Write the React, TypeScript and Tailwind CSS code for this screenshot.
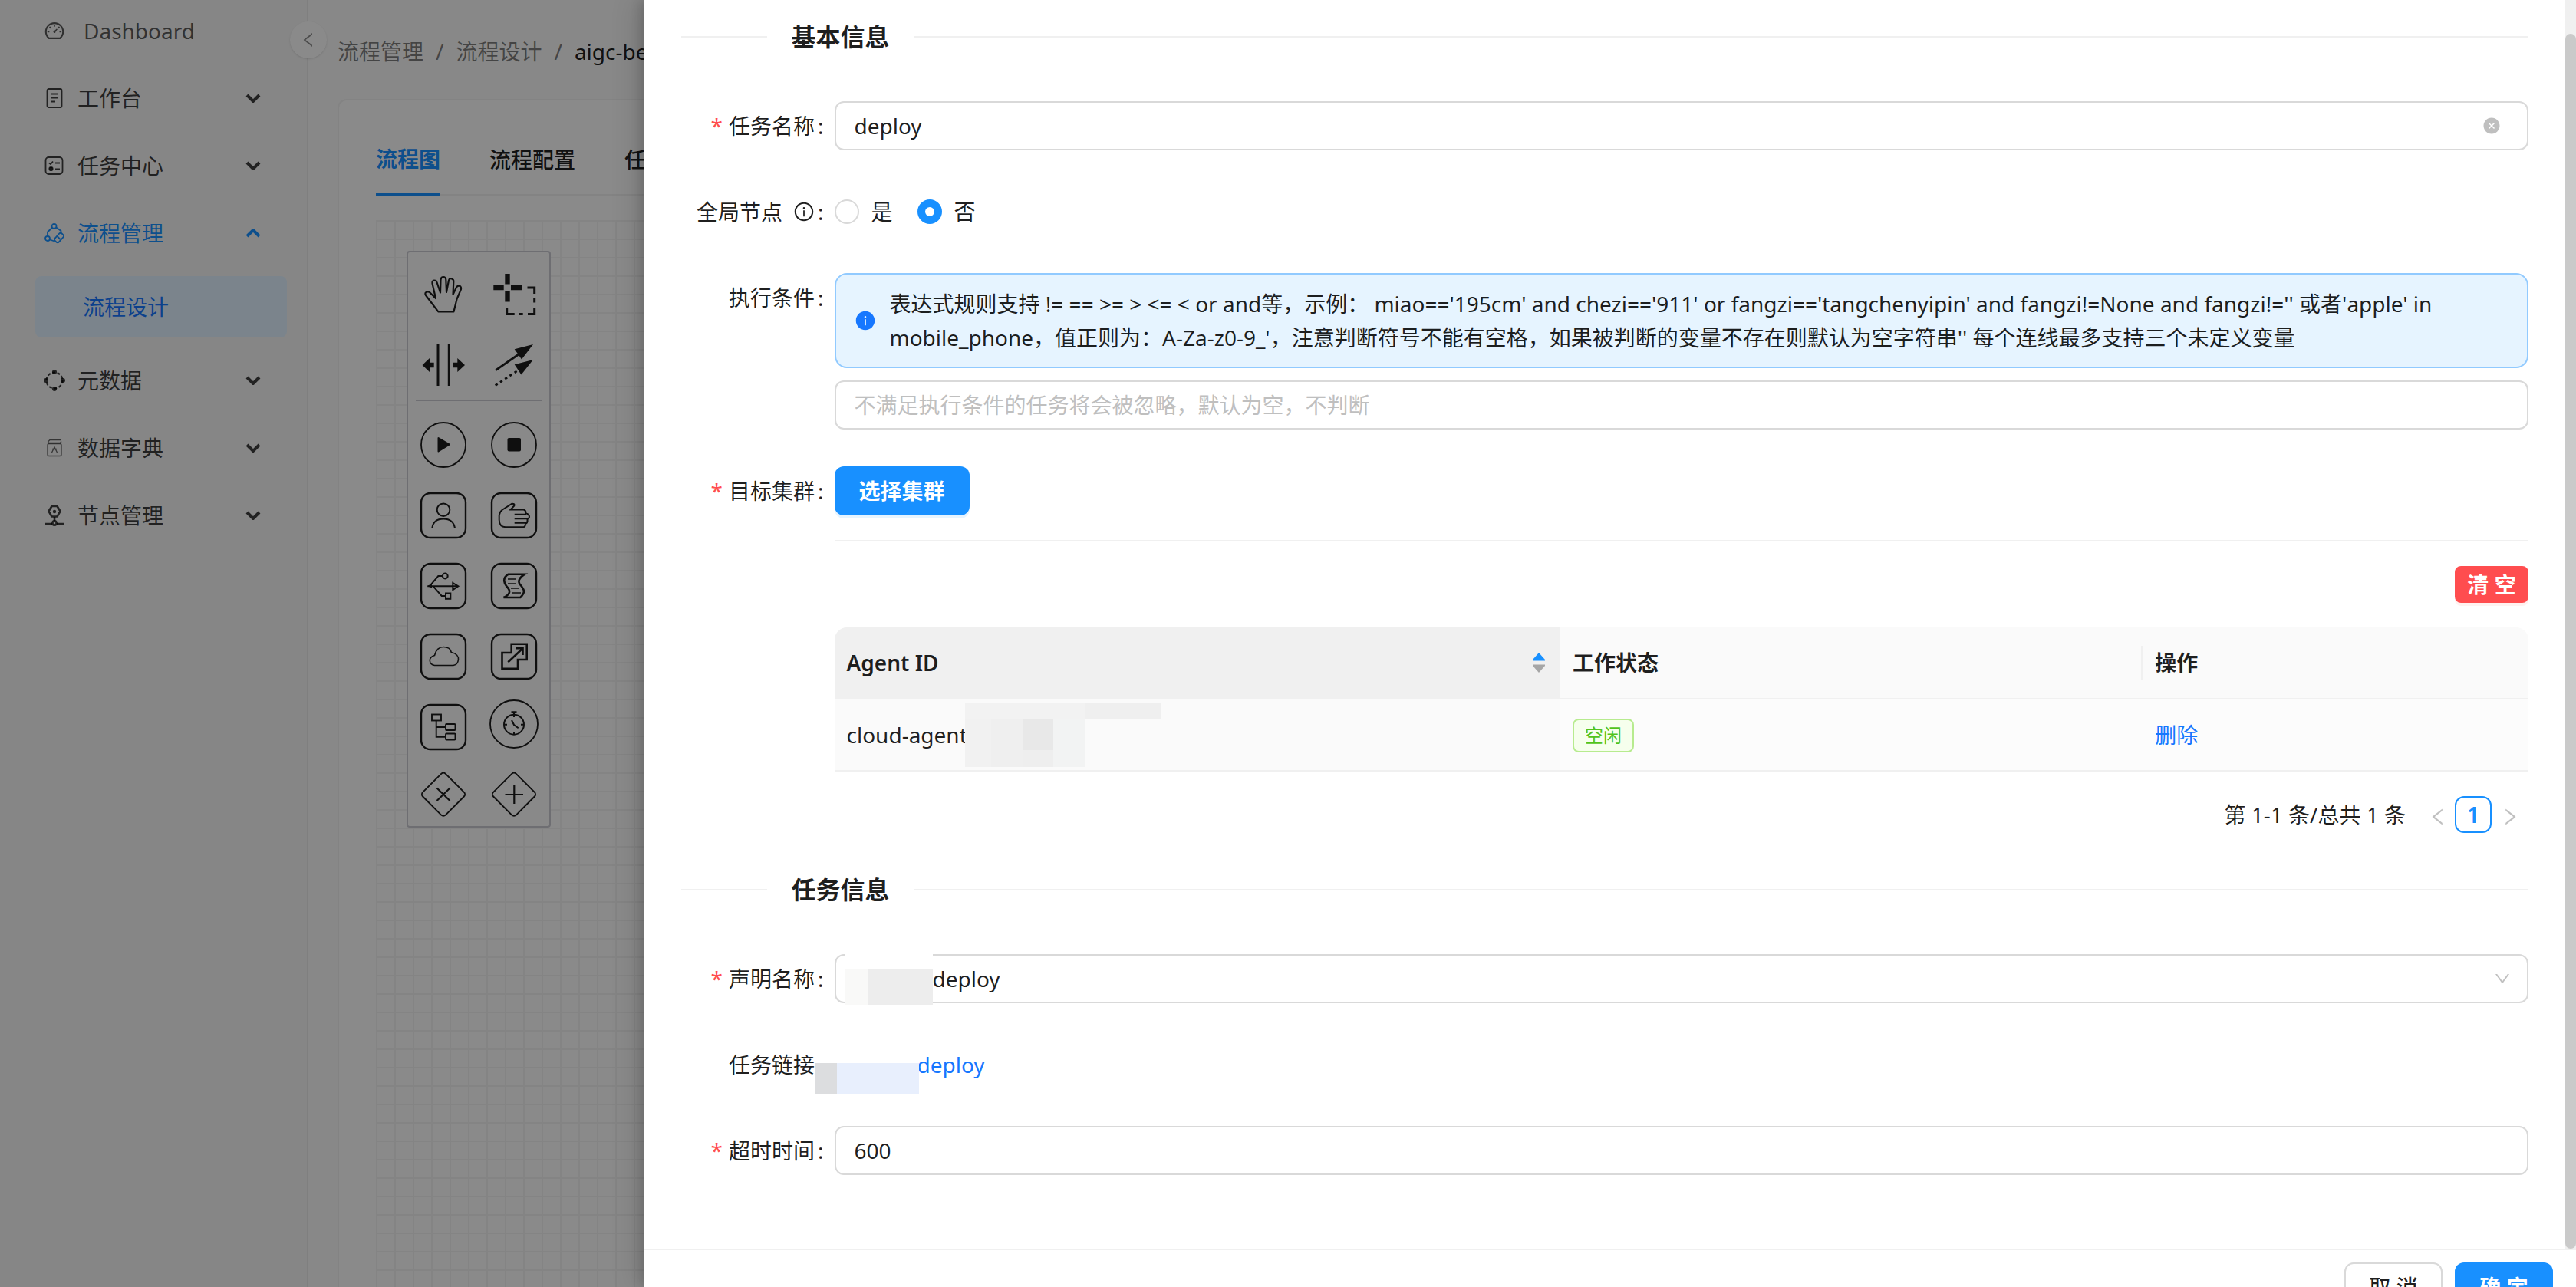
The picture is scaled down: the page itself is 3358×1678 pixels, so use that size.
import type { ReactNode } from "react";
import {
  AiFillCloseCircle,
  AiFillInfoCircle,
  AiOutlineDashboard,
  AiOutlineDown,
  AiOutlineInfoCircle,
  AiOutlineLeft,
  AiOutlineRight,
} from "react-icons/ai";

/* ---------- sidebar icons ---------- */

function MenuSvg({ children }: { children: ReactNode }) {
  return (
    <svg viewBox="0 0 28 28" className="size-7 shrink-0" fill="none" stroke="currentColor" strokeWidth="1.8">
      {children}
    </svg>
  );
}

const WorkbenchIcon = () => (
  <MenuSvg>
    <rect x="4.5" y="2" width="19" height="24" rx="2" />
    <path d="M9 8.5h10M9 13.5h10M9 18.5h6" />
  </MenuSvg>
);

const TaskIcon = () => (
  <MenuSvg>
    <rect x="2.5" y="3" width="22" height="22" rx="4" />
    <path d="M7 10.5l2 1.5 3-3.5M15 10.500h6M15 18.500h6" />
    <circle cx="9.500" cy="18" r="2.200" fill="currentColor" />
  </MenuSvg>
);

const FlowIcon = () => (
  <MenuSvg>
    <circle cx="13.500" cy="5" r="3" />
    <circle cx="5" cy="21" r="3" />
    <rect x="13.500" y="16.500" width="13" height="7" rx="2.500" transform="rotate(-48 20 20)" />
    <path d="M10.800 7L5 12.500V18M16.200 6.500L22.500 11V14M8 22.500L14 24.500M17.500 18l4 4" />
  </MenuSvg>
);

const MetaIcon = () => (
  <MenuSvg>
    <circle cx="14" cy="14" r="10.500" strokeDasharray="4 2.600" strokeWidth="2.200" />
    <g fill="currentColor" stroke="none">
      <circle cx="14" cy="3" r="3" />
      <circle cx="14" cy="25" r="3" />
      <circle cx="3" cy="14" r="3" />
      <circle cx="25" cy="14" r="3" />
    </g>
  </MenuSvg>
);

const DictIcon = () => (
  <MenuSvg>
    <g strokeWidth="1.300" opacity="0.8">
      <path d="M6 7.500V5.500l2-2h15M6 7.500h15.500l1.500-2" />
      <rect x="5" y="8.500" width="18" height="16" rx="2" />
      <path d="M10.500 20L14 13l3.500 7M11 15.500h6" />
    </g>
  </MenuSvg>
);

const NodeIcon = () => (
  <MenuSvg>
    <g strokeWidth="2.600">
      <path d="M10.500 2h7l4 6.500-4 7h-7l-4-7z" strokeLinejoin="round" />
      <path d="M14 16v5M2 25h9M17 25h9" />
      <circle cx="14" cy="24" r="2.600" />
    </g>
    <circle cx="14" cy="9" r="2.200" fill="currentColor" stroke="none" />
  </MenuSvg>
);

function Caret({ open }: { open?: boolean }) {
  return (
    <svg viewBox="0 0 20 12" className="ml-auto h-3 w-5" fill="none" stroke="currentColor" strokeWidth="4">
      <path d={open ? "M2 10l8-8 8 8" : "M2 2l8 8 8-8"} />
    </svg>
  );
}

/* ---------- diagram palette ---------- */

const box = <rect x="1" y="1" width="58" height="58" rx="12" strokeWidth="2.400" />;

const tools: { name: string; icon: ReactNode }[] = [
  {
    name: "hand",
    icon: (
      <path
        strokeWidth="2.200"
        strokeLinejoin="round"
        d="M23.300 52.300L7 31Q5 27 9 26.500Q11.500 26 13 28L20 35L15.500 15.500Q15 12 18 11.500Q21 11.500 21.500 14L26 27.500L26.500 10.500Q27 7 30 7Q33 7 33.300 10.500L34 27L37 11.500Q38 8.500 41 9.500Q43.500 10.500 43.300 13L42.500 30L47 20.500Q49 18 51.500 19Q53.500 20.500 53 23L47.500 36L43.500 52.300Z"
      />
    ),
  },
  {
    name: "lasso",
    icon: (
      <>
        <path strokeWidth="6.400" d="M21.500 3v13.500M21.500 26v13.500M3.300 21h13.400M26 21h14" />
        <path strokeWidth="3" d="M47.500 21h9.200v8M56.700 35v5.500M56.700 47v8.500H48M41.700 55.500H36M20.700 47v8.500h10" />
      </>
    ),
  },
  {
    name: "space",
    icon: (
      <>
        <path strokeWidth="3" d="M23 3v54M37.300 3v54" />
        <path
          stroke="none"
          fill="currentColor"
          d="M2.500 30L12 21v5.700h5.700v6.600H12V39zM58 30l-9.700-9v5.700h-6v6.600h6V39z"
        />
      </>
    ),
  },
  {
    name: "connect",
    icon: (
      <>
        <path strokeWidth="2.800" d="M6.300 36.700L36 16" />
        <path strokeWidth="2.800" strokeDasharray="3.500 4" d="M5.700 56.500L35 37" />
        <path
          stroke="none"
          fill="currentColor"
          d="M55 3L30.700 9.300L40 22.500zM55 23L30.700 29.300L39.500 42.500z"
        />
      </>
    ),
  },
];

const shapes: { name: string; icon: ReactNode }[] = [
  {
    name: "start",
    icon: (
      <>
        <circle cx="30" cy="30" r="29" strokeWidth="1.800" />
        <path fill="currentColor" strokeLinejoin="round" d="M23.500 21L38 29.500L23.500 38.500z" />
      </>
    ),
  },
  {
    name: "end",
    icon: (
      <>
        <circle cx="30" cy="30" r="29" strokeWidth="1.800" />
        <rect x="21.500" y="21" width="17.500" height="17.500" rx="2" fill="currentColor" stroke="none" />
      </>
    ),
  },
  {
    name: "user",
    icon: (
      <>
        {box}
        <circle cx="30" cy="22.700" r="8.300" />
        <path d="M15.300 46.500C16.500 38.500 22 34.500 30 34.500S43.500 38.500 45 46.500" />
      </>
    ),
  },
  {
    name: "manual",
    icon: (
      <>
        {box}
        <path d="M27.300 14.700Q31.500 14.500 30.300 17.500L25.500 22.500H42.500Q45.500 23 45.700 27.300Q50 28.500 50 32Q49.500 34.500 47.500 35Q48 40 45 40.700Q45 45 42.300 45.300H19Q11 45 10.700 36V29.700Q11 25.500 14.700 22.700z" />
        <path d="M30.700 28.700H46M30.700 34.300H48M30.700 39.700H46" />
      </>
    ),
  },
  {
    name: "service",
    icon: (
      <>
        {box}
        <path d="M9.300 30.300H49M12.700 29.300L23.300 17H29M16.700 30.300L27.700 43H32.500M42.300 26V35L49.300 30.300z" />
        <circle cx="32.300" cy="17" r="3.400" />
        <rect x="33" y="39.500" width="6.300" height="7.300" />
        <path d="M9 30.300L15 26.500V32.500z" fill="currentColor" stroke="none" />
      </>
    ),
  },
  {
    name: "script",
    icon: (
      <>
        {box}
        <path
          strokeWidth="2.600"
          d="M22.700 14.700H44Q33.500 21.500 37.500 27.500C43 34 46 38 38.300 45H16.500Q27.500 40 22.500 33C17 27 14 20 22.700 14.700z"
        />
        <path strokeWidth="1.400" d="M22 21h10M22 27h11M26 33h10M28 39h11" />
      </>
    ),
  },
  {
    name: "cloud",
    icon: (
      <>
        {box}
        <path
          strokeWidth="1.600"
          d="M18.500 41.500C11 40.500 9.500 31 18.500 28.500C20 21 25 17.500 30 17.500C36 17.500 39.500 20 40.300 24.500C47 26 50 30 49.500 34C49 38.500 46 41 43 41.500z"
        />
      </>
    ),
  },
  {
    name: "call",
    icon: (
      <>
        {box}
        <path strokeWidth="2.600" d="M14.500 25H26.700V13.700H46.700V34H35V45.700H14.500z" />
        <path strokeWidth="2.600" d="M22.300 37.300L41.500 19.300M33 19.300H41.500V28" />
      </>
    ),
  },
  {
    name: "subprocess",
    icon: (
      <>
        {box}
        <g strokeWidth="1.900">
          <rect x="15" y="13.500" width="12" height="8" />
          <rect x="33" y="26" width="12.500" height="8" rx="1" />
          <rect x="33" y="38.500" width="12.500" height="8" rx="1" />
          <path d="M20.700 21.500V42.700H33M20.700 30H33" />
        </g>
      </>
    ),
  },
  {
    name: "timer",
    icon: (
      <>
        <circle cx="30" cy="26" r="31" strokeWidth="1.800" />
        <circle cx="30" cy="26.700" r="13" />
        <path d="M26.500 10.300H33.500M30 10.300V17M27 21L30 27L35.700 31.300M17 26.700h4M39 26.700h4M30 36v3.500" />
      </>
    ),
  },
  {
    name: "exclusive",
    icon: (
      <>
        <rect x="9" y="4.700" width="42" height="42" rx="4" transform="rotate(45 30 25.700)" strokeWidth="1.900" />
        <path strokeWidth="2.200" d="M21.500 17.500L38.500 34M38.500 17.500L21.500 34" />
      </>
    ),
  },
  {
    name: "parallel",
    icon: (
      <>
        <rect x="9" y="4.700" width="42" height="42" rx="4" transform="rotate(45 30 25.700)" strokeWidth="1.900" />
        <path strokeWidth="2.200" d="M18.500 26H42M30.300 14V38" />
      </>
    ),
  },
];

function PaletteGrid({ entries }: { entries: { name: string; icon: ReactNode }[] }) {
  return (
    <div className="grid grid-cols-2">
      {entries.map((e) => (
        <button key={e.name} type="button" aria-label={e.name} className="flex h-[92px] items-center justify-center pt-[18px]">
          <svg
            viewBox="0 0 60 60"
            className="size-[60px] overflow-visible text-[#1c1c1c]"
            fill="none"
            stroke="currentColor"
            strokeWidth="2"
          >
            {e.icon}
          </svg>
        </button>
      ))}
    </div>
  );
}

/* ---------- page behind the drawer ---------- */

const groupsBefore = [
  { label: "工作台", icon: <WorkbenchIcon /> },
  { label: "任务中心", icon: <TaskIcon /> },
];

const groupsAfter = [
  { label: "元数据", icon: <MetaIcon /> },
  { label: "数据字典", icon: <DictIcon /> },
  { label: "节点管理", icon: <NodeIcon /> },
];

function MenuGroup({ label, icon, open }: { label: string; icon: ReactNode; open?: boolean }) {
  return (
    <button
      type="button"
      className={`flex h-20 w-full items-center gap-4 pr-[34px] pl-[11px] ${open ? "text-[#1890ff]" : "text-black/75"}`}
    >
      {icon}
      <span>{label}</span>
      <Caret open={open} />
    </button>
  );
}

function Sidebar() {
  return (
    <aside className="relative w-[402px] shrink-0 border-r-2 border-black/5 bg-[#f5f5f5] pr-[26px] pl-[46px]">
      <nav className="flex flex-col gap-2">
        <a href="#" className="flex h-20 items-center gap-6 pl-[11px] text-black/65">
          <AiOutlineDashboard className="size-7" />
          Dashboard
        </a>
        {groupsBefore.map((g) => (
          <MenuGroup key={g.label} {...g} />
        ))}
        <MenuGroup label="流程管理" icon={<FlowIcon />} open />
        <a href="#" className="my-2 flex h-20 items-center rounded-lg bg-[#e0f1ff] pl-[62px] text-[#1677ff]">
          流程设计
        </a>
        {groupsAfter.map((g) => (
          <MenuGroup key={g.label} {...g} />
        ))}
      </nav>
      <button
        type="button"
        aria-label="收起菜单"
        className="absolute top-7 -right-[26px] flex size-12 items-center justify-center rounded-full bg-[#fcfcfc] text-black/45 shadow-sm"
      >
        <AiOutlineLeft className="size-6" />
      </button>
    </aside>
  );
}

function Workspace() {
  return (
    <main className="flex min-w-0 flex-1 flex-col bg-[#f8f8f8] pl-[38px]">
      <div className="flex h-[129px] items-center gap-4 pt-1 whitespace-nowrap text-black/50">
        <a href="#">流程管理</a>
        <span>/</span>
        <a href="#">流程设计</a>
        <span>/</span>
        <span className="text-black/90">aigc-bert-deploy</span>
      </div>
      <div className="flex flex-1 flex-col rounded-tl-xl border-t-2 border-l-2 border-black/5 bg-[#fcfcfc] pl-12">
        <div className="mt-8 flex h-[92px] gap-16 border-b-2 border-black/5 whitespace-nowrap">
          <button type="button" className="-mb-0.5 border-b-4 border-[#1890ff] font-semibold text-[#1890ff]">
            流程图
          </button>
          <button type="button" className="font-medium text-black/90">流程配置</button>
          <button type="button" className="font-medium text-black/90">任务</button>
        </div>
        <div className="mt-8 flex-1 bg-[linear-gradient(to_right,#f1f1f1_2px,transparent_2px),linear-gradient(to_bottom,#f1f1f1_2px,transparent_2px)] bg-size-[24px_24px] pt-10 pl-10">
          <div className="w-[188px] rounded-sm border-2 border-[#c8c8d0] bg-[#fafafa]">
            <PaletteGrid entries={tools} />
            <div className="mx-[10px] mt-2 mb-0.5 border-t-2 border-[#c8c8d0]" />
            <PaletteGrid entries={shapes} />
          </div>
        </div>
      </div>
    </main>
  );
}

/* ---------- drawer ---------- */

function SectionTitle({ children }: { children: ReactNode }) {
  return (
    <div className="mt-[50px] mb-[60px] flex h-12 items-center gap-8 first:mt-0">
      <div className="h-0.5 w-28 bg-[#f0f0f0]" />
      <h2 className="text-[32px] leading-[48px] font-semibold">{children}</h2>
      <div className="h-0.5 flex-1 bg-[#f0f0f0]" />
    </div>
  );
}

function Field({
  label,
  htmlFor,
  required,
  hint,
  children,
}: {
  label: string;
  htmlFor?: string;
  required?: boolean;
  hint?: boolean;
  children: ReactNode;
}) {
  return (
    <div className="mb-12 flex items-start">
      <label htmlFor={htmlFor} className="flex h-16 w-[200px] shrink-0 items-center justify-end pr-[14px] whitespace-nowrap">
        {required && <span className="mr-2 text-[#ff4d4f]">*</span>}
        {label}
        {hint && <AiOutlineInfoCircle className="ml-[14px] size-7" />}
        <span className="ml-1">:</span>
      </label>
      <div className="min-w-0 flex-1">{children}</div>
    </div>
  );
}

const inputClass =
  "block h-16 w-full rounded-xl border-2 border-[#d9d9d9] bg-white px-6 outline-none placeholder:text-[#bfbfbf]";

const radioClass =
  "size-8 appearance-none rounded-full border-2 border-[#d9d9d9] bg-white checked:border-[10px] checked:border-[#1890ff]";

function Sorter() {
  return (
    <svg viewBox="0 0 16 26" className="mr-1 h-[26px] w-4">
      <path d="M8 0L16 9V10.500H0V9z" fill="#1890ff" />
      <path d="M8 26L16 17V15.500H0V17z" fill="#a6a6a6" />
    </svg>
  );
}

function AgentTable() {
  return (
    <table className="mt-8 w-full table-fixed border-separate border-spacing-0 text-left">
      <colgroup>
        <col className="w-3/7" />
        <col className="w-11/32" />
        <col />
      </colgroup>
      <thead>
        <tr className="h-[94px]">
          <th className="rounded-tl-2xl border-b-2 border-[#f0f0f0] bg-[#f0f0f0] px-4 font-semibold">
            <span className="flex items-center justify-between">
              Agent ID
              <Sorter />
            </span>
          </th>
          <th className="border-b-2 border-[#f0f0f0] bg-[#fafafa] px-4 font-semibold">
            <span className="-mr-4 flex h-11 items-center border-r-2 border-[#f0f0f0]">工作状态</span>
          </th>
          <th className="rounded-tr-2xl border-b-2 border-[#f0f0f0] bg-[#fafafa] px-4 font-semibold">操作</th>
        </tr>
      </thead>
      <tbody>
        <tr className="h-[94px]">
          <td className="relative border-b-2 border-[#f0f0f0] bg-[#fafafa] px-4">
            cloud-agent
            {/* redacted part of the id */}
            <div aria-hidden="true" className="absolute top-1 left-[170px] h-[84px] w-64">
              <div className="flex h-[22px]">
                <div className="w-[156px] bg-[#f2f2f2]" />
                <div className="flex-1 bg-[#efefef]" />
              </div>
              <div className="flex h-[62px] w-[156px]">
                <div className="w-[34px] bg-[#f1f1f1]" />
                <div className="w-[41px] bg-[#efefef]" />
                <div className="w-10 bg-[#eeeeee]">
                  <div className="h-10 bg-[#e8e8e8]" />
                </div>
                <div className="flex-1 bg-[#f2f3f3]" />
              </div>
            </div>
          </td>
          <td className="border-b-2 border-[#f0f0f0] bg-[#fcfcfc] px-4">
            <span className="inline-flex h-11 items-center rounded-lg border-2 border-[#b7eb8f] bg-[#f6ffed] px-[14px] text-2xl text-[#52c41a]">
              空闲
            </span>
          </td>
          <td className="border-b-2 border-[#f0f0f0] bg-[#fcfcfc] px-4">
            <a href="#" className="text-[#1677ff]">
              删除
            </a>
          </td>
        </tr>
      </tbody>
    </table>
  );
}

function Drawer() {
  return (
    <section
      role="dialog"
      aria-label="任务配置"
      className="absolute inset-y-0 right-0 flex w-3/4 flex-col bg-white text-black/88 shadow-[-12px_0_32px_rgba(0,0,0,0.12),-6px_0_12px_rgba(0,0,0,0.12)]"
    >
      <div className="flex shrink-0">
        <form className="min-w-0 flex-1 px-12 pt-6 pb-12">
          <SectionTitle>基本信息</SectionTitle>

          <Field label="任务名称" htmlFor="name" required>
            <div className="relative">
              <input id="name" className={inputClass} defaultValue="deploy" />
              <button type="button" aria-label="清除" className="absolute top-5 right-9 text-[#bfbfbf]">
                <AiFillCloseCircle className="size-6" />
              </button>
            </div>
          </Field>

          <Field label="全局节点" hint>
            <div className="flex h-16 items-center">
              <label className="flex items-center gap-4">
                <input type="radio" name="global" className={radioClass} />是
              </label>
              <label className="ml-8 flex items-center gap-4">
                <input type="radio" name="global" defaultChecked className={radioClass} />否
              </label>
            </div>
          </Field>

          <Field label="执行条件" htmlFor="condition">
            <div className="mb-4 flex items-center gap-[18px] rounded-2xl border-2 border-[#91caff] bg-[#e6f4ff] px-6 py-4">
              <AiFillInfoCircle className="size-7 shrink-0 text-[#1677ff]" />
              <p className="flex-1 leading-[44px]">
                {
                  "表达式规则支持 != == >= > <= < or and等，示例： miao=='195cm' and chezi=='911' or fangzi=='tangchenyipin' and fangzi!=None and fangzi!='' 或者'apple' in mobile_phone，值正则为：A-Za-z0-9_'，注意判断符号不能有空格，如果被判断的变量不存在则默认为空字符串'' 每个连线最多支持三个未定义变量"
                }
              </p>
            </div>
            <input id="condition" className={inputClass} placeholder="不满足执行条件的任务将会被忽略，默认为空，不判断" />
          </Field>

          <Field label="目标集群" required>
            <button type="button" className="block h-16 rounded-xl bg-[#1890ff] px-8 font-semibold text-white shadow-[0_4px_0_rgba(5,145,255,0.1)]">
              选择集群
            </button>
            <hr className="mt-8 border-t-2 border-[#f0f0f0]" />
            <div className="mt-8 flex justify-end">
              <button type="button" className="h-12 w-24 rounded-lg bg-[#ff4d4f] font-semibold text-white shadow-[0_4px_0_rgba(255,38,5,0.06)]">
                清 空
              </button>
            </div>
            <AgentTable />
            <div className="mt-8 flex h-12 items-center justify-end">
              <span className="mr-7">第 1-1 条/总共 1 条</span>
              <button type="button" aria-label="上一页" disabled className="mr-2 flex h-12 w-7 items-center justify-center pt-1.5 text-black/25">
                <AiOutlineLeft className="size-7" />
              </button>
              <button type="button" className="size-12 rounded-xl border-2 border-[#1890ff] font-semibold text-[#1890ff]">
                1
              </button>
              <button type="button" aria-label="下一页" disabled className="flex size-12 items-center justify-center pt-1.5 text-black/25">
                <AiOutlineRight className="size-7" />
              </button>
            </div>
          </Field>

          <SectionTitle>任务信息</SectionTitle>

          <Field label="声明名称" htmlFor="statement" required>
            <div className="relative">
              <select id="statement" className={`${inputClass} appearance-none pl-[126px]`}>
                <option>deploy</option>
              </select>
              <AiOutlineDown className="pointer-events-none absolute top-5 right-[22px] size-6 text-black/25" />
              {/* redacted prefix */}
              <div aria-hidden="true" className="absolute -top-2 left-[14px] flex h-[74px] w-[114px] bg-white pt-[27px]">
                <div className="w-[29px] bg-[#f9f9f8]" />
                <div className="flex-1 bg-[#ededed]" />
              </div>
            </div>
          </Field>

          <Field label="任务链接">
            <div className="relative flex h-16 items-center pl-[108px]">
              <a href="#" className="text-[#1677ff]">
                deploy
              </a>
              {/* redacted prefix */}
              <div aria-hidden="true" className="absolute top-0 -left-[26px] flex h-[71px] w-[136px] bg-white pt-[30px]">
                <div className="w-[29px] bg-[#dcdddf]" />
                <div className="flex-1 bg-[#e8effd]" />
              </div>
            </div>
          </Field>

          <Field label="超时时间" htmlFor="timeout" required>
            <input id="timeout" className={inputClass} defaultValue="600" />
          </Field>
        </form>
        <div aria-hidden="true" className="flex w-[14px] bg-[#f0f0f0] pt-11">
          <div className="flex-1 rounded-full bg-[#cacaca]" />
        </div>
      </div>

      <footer className="flex shrink-0 justify-end gap-4 border-t-2 border-[#f0f0f0] px-[30px] py-4">
        <button type="button" className="h-16 w-32 rounded-xl border-2 border-[#d9d9d9] bg-white font-medium">
          取 消
        </button>
        <button type="button" className="h-16 w-32 rounded-xl bg-[#1890ff] font-semibold text-white">
          确 定
        </button>
      </footer>
    </section>
  );
}

export default function App() {
  return (
    <div
      lang="zh-CN"
      className="relative h-screen overflow-hidden font-['Noto_Sans','Noto_Sans_CJK_SC',sans-serif] text-[28px] leading-[44px]"
    >
      <div className="flex h-full">
        <Sidebar />
        <Workspace />
      </div>
      <div className="absolute inset-0 bg-black/45" />
      <Drawer />
    </div>
  );
}
